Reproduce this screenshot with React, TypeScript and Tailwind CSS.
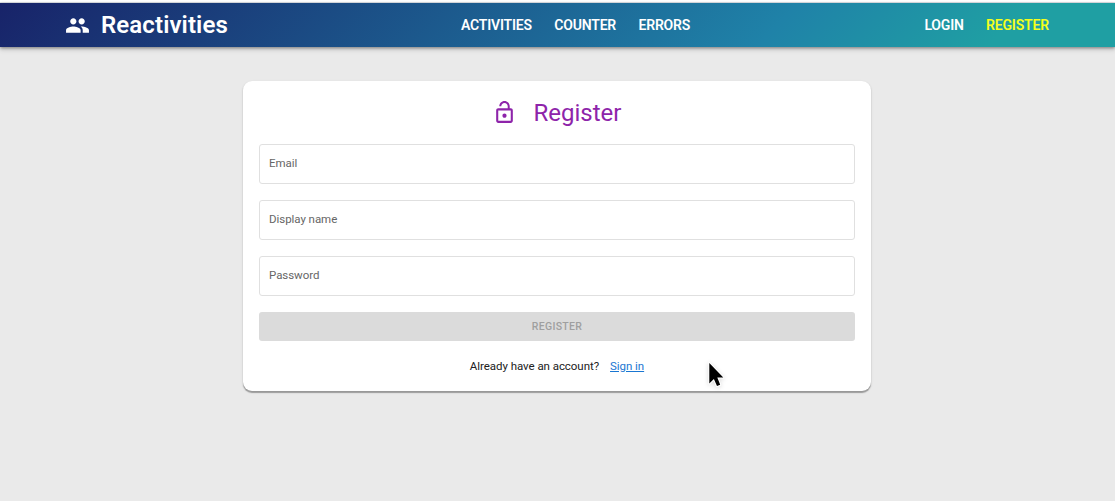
function GroupIcon() {
  return (
    <svg viewBox="0 0 24 24" className="size-[25px] shrink-0 fill-current" aria-hidden="true">
      <path d="M16 11c1.66 0 2.99-1.34 2.99-3S17.66 5 16 5s-3 1.34-3 3 1.34 3 3 3m-8 0c1.66 0 2.99-1.34 2.99-3S9.66 5 8 5 5 6.34 5 8s1.34 3 3 3m0 2c-2.33 0-7 1.17-7 3.5V19h14v-2.5c0-2.33-4.67-3.5-7-3.5m8 0c-.29 0-.62.02-.97.05 1.16.84 1.97 1.97 1.97 3.45V19h6v-2.5c0-2.33-4.67-3.5-7-3.5" />
    </svg>
  );
}

function LockOpenIcon() {
  return (
    <svg viewBox="0 0 24 24" className="size-[25px] shrink-0 fill-current" aria-hidden="true">
      <path d="M12 17c1.1 0 2-.9 2-2s-.9-2-2-2-2 .9-2 2 .9 2 2 2m6-9h-1V6c0-2.76-2.24-5-5-5S7 3.24 7 6h1.9c0-1.71 1.39-3.1 3.1-3.1s3.1 1.39 3.1 3.1v2H6c-1.1 0-2 .9-2 2v10c0 1.1.9 2 2 2h12c1.1 0 2-.9 2-2V10c0-1.1-.9-2-2-2m0 12H6V10h12z" />
    </svg>
  );
}

function Cursor() {
  return (
    <svg viewBox="0 0 20 30" className="pointer-events-none absolute left-[706px] top-[359px] h-[30px] w-[20px] drop-shadow-sm" aria-hidden="true">
      <path
        d="M3.3 4V24.4L7.9 20.1L11 27L14.2 25.7L11.3 18.6H17.3Z"
        fill="#000"
        stroke="#fff"
        strokeWidth="2"
        strokeLinejoin="round"
        paintOrder="stroke"
      />
    </svg>
  );
}

function NavBar() {
  return (
    <header className="relative flex h-[44px] items-center bg-[linear-gradient(135deg,#182369_0%,#1f82a8_69%,#1f9fa3_89%)] pl-[65px] pr-[66px] text-white shadow-[0_1px_3px_rgba(0,0,0,0.4),0_3px_5px_rgba(0,0,0,0.12)]">
      <a className="flex w-[396px] items-center gap-[11px]">
        <GroupIcon />
        <span className="text-[24px] font-semibold leading-none tracking-[0.1px]">Reactivities</span>
      </a>
      <nav className="flex flex-1 items-center gap-[22.5px] text-[14px] font-semibold leading-none tracking-[-0.2px]">
        <a>ACTIVITIES</a>
        <a>COUNTER</a>
        <a>ERRORS</a>
      </nav>
      <nav className="flex items-center gap-[22px] text-[14px] font-semibold leading-none tracking-[-0.15px]">
        <a>LOGIN</a>
        <a className="text-[#f5ff1c]">REGISTER</a>
      </nav>
    </header>
  );
}

function Field({ label }: { label: string }) {
  return (
    <label className="flex h-[40px] items-center rounded-[3px] border border-[#e0e0e0] px-[9px] pb-px text-[11.5px] tracking-[-0.05px] text-[#666]">
      {label}
    </label>
  );
}

export default function App() {
  return (
    <div className="relative h-[501px] overflow-hidden bg-[#eaeaea] font-['Roboto',sans-serif]">
      <div className="h-[3px] border-b border-[#e4e6ea] bg-white" />
      <NavBar />
      <main className="ml-[243px] mt-[34px] flex h-[310px] w-[628px] flex-col rounded-[9px] bg-white px-4 shadow-[0_1.5px_1px_rgba(0,0,0,0.3),0_1px_3px_rgba(0,0,0,0.1)]">
        <h1 className="flex h-[63px] items-center justify-center gap-[17px] pr-px text-[24px] text-[#8e24aa]">
          <LockOpenIcon />
          <span>Register</span>
        </h1>
        <form className="flex flex-col gap-4">
          <Field label="Email" />
          <Field label="Display name" />
          <Field label="Password" />
          <button type="button" disabled className="h-[29px] rounded-[3px] bg-[#dbdbdb] text-[10.5px] font-medium tracking-[0.3px] text-[#9f9f9f]">
            REGISTER
          </button>
        </form>
        <p className="mt-4 flex justify-center gap-[11px] text-[11.5px] leading-[18px] tracking-[-0.05px] text-[#212121]">
          <span>Already have an account?</span>
          <a className="text-[#1976d2] underline">Sign in</a>
        </p>
      </main>
      <Cursor />
    </div>
  );
}
